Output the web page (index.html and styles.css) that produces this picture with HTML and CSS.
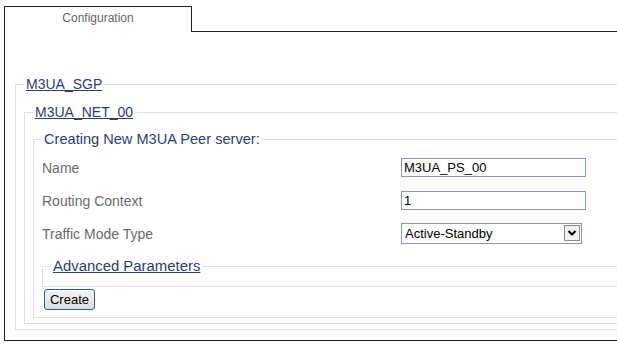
FILE: index.html
```html
<!DOCTYPE html>
<html lang="en">
<head>
    <meta charset="UTF-8">
    <title>M3UA Peer server</title>
    <link rel="stylesheet" href="styles.css">
</head>
<body>
    <div class="page">
        <div class="tabs">
            <div class="tab">Configuration</div>
            <div class="tab-fill"></div>
        </div>

        <div class="panel">
            <fieldset class="group">
                <legend><a href="#">M3UA_SGP</a></legend>

                <fieldset class="group net">
                    <legend><a href="#">M3UA_NET_00</a></legend>

                    <!-- peer server form -->
                    <fieldset class="group create">
                        <legend class="title">Creating New M3UA Peer server:</legend>
                        <div class="form-grid">
                            <label for="psName">Name</label>
                            <input type="text" id="psName" value="M3UA_PS_00">

                            <label for="routingContext">Routing Context</label>
                            <input type="text" id="routingContext" value="1">

                            <label for="trafficMode">Traffic Mode Type</label>
                            <div class="select-wrap">
                                <select id="trafficMode">
                                    <option>Active-Standby</option>
                                    <option>Loadshare</option>
                                    <option>Broadcast</option>
                                </select>
                                <span class="select-arrow">
                                    <svg width="10" height="8" viewBox="0 0 10 8">
                                        <path d="M1.5 2 L5 5.5 L8.5 2" fill="none" stroke="#000" stroke-width="2"/>
                                    </svg>
                                </span>
                            </div>
                        </div>

                        <fieldset class="group advanced">
                            <legend><a href="#">Advanced Parameters</a></legend>
                        </fieldset>

                        <button type="button" class="btn">Create</button>
                    </fieldset>
                </fieldset>
            </fieldset>
        </div>
    </div>
</body>
</html>
```

FILE: styles.css
```css
body {
    margin: 0;
    overflow: hidden;
    background-color: #fff;
    font-family: "Liberation Sans", Arial, sans-serif;
}

.page {
    width: 900px;
    padding: 6px 0 0 4px;
}

.tabs {
    display: flex;
    height: 26px;
}

.tab {
    width: 188px;
    box-sizing: border-box;
    border: 1px solid #222;
    border-bottom: none;
    text-align: center;
    font-size: 12px;
    line-height: 22px;
    color: #666;
}

.tab-fill {
    flex: 1;
    border-bottom: 1px solid #222;
}

.panel {
    border-left: 1px solid #222;
    border-bottom: 1px solid #222;
    padding: 44px 0 10px 10px;
}

.group {
    margin: 0;
    padding: 0 0 5px 8px;
    border: 1px solid #e0e0e0;
    min-width: 0;
}

.group legend {
    padding: 0 2px;
    font-size: 14px;
    line-height: 16px;
}

.group legend a {
    color: #2c3e6e;
    text-decoration: underline;
}

.group .title {
    color: #2c3e6e;
    font-size: 14.6px;
}

.net {
    margin-top: 12px;
}

.create {
    margin-top: 11px;
    padding-bottom: 7px;
}

.form-grid {
    display: grid;
    grid-template-columns: 359px 185px;
    grid-auto-rows: 33px;
    align-items: center;
    margin-top: 4px;
}

.form-grid label {
    font-size: 14px;
    color: #6a6a6a;
}

.form-grid input {
    width: 185px;
    height: 19px;
    box-sizing: border-box;
    border: 1px solid #7f9db9;
    padding: 0 2px;
    font-family: Arial, "Liberation Sans", sans-serif;
    font-size: 13px;
    color: #000;
}

.select-wrap {
    position: relative;
    width: 181px;
    height: 21px;
}

.select-wrap select {
    appearance: none;
    width: 100%;
    height: 21px;
    box-sizing: border-box;
    border: 1px solid #7f9db9;
    border-radius: 0;
    background-color: #fff;
    padding: 0 0 0 3px;
    font-family: Arial, "Liberation Sans", sans-serif;
    font-size: 13px;
    color: #000;
}

.select-arrow {
    position: absolute;
    top: 2px;
    right: 2px;
    width: 16px;
    height: 16px;
    box-sizing: border-box;
    border: 1px solid #8a8a8a;
    background-color: #f0f0f0;
    display: flex;
    justify-content: center;
    align-items: center;
}

.advanced {
    margin-top: 8px;
    padding-bottom: 12px;
}

.advanced legend {
    font-size: 14.9px;
}

.btn {
    margin: 2px 0 0 2px;
    width: 51px;
    height: 21px;
    padding: 0;
    border: 1px solid #2f5f8f;
    border-radius: 3px;
    background: linear-gradient(#f4f4f4, #dcdcdc);
    font-family: Arial, "Liberation Sans", sans-serif;
    font-size: 13px;
    color: #000;
}
```
